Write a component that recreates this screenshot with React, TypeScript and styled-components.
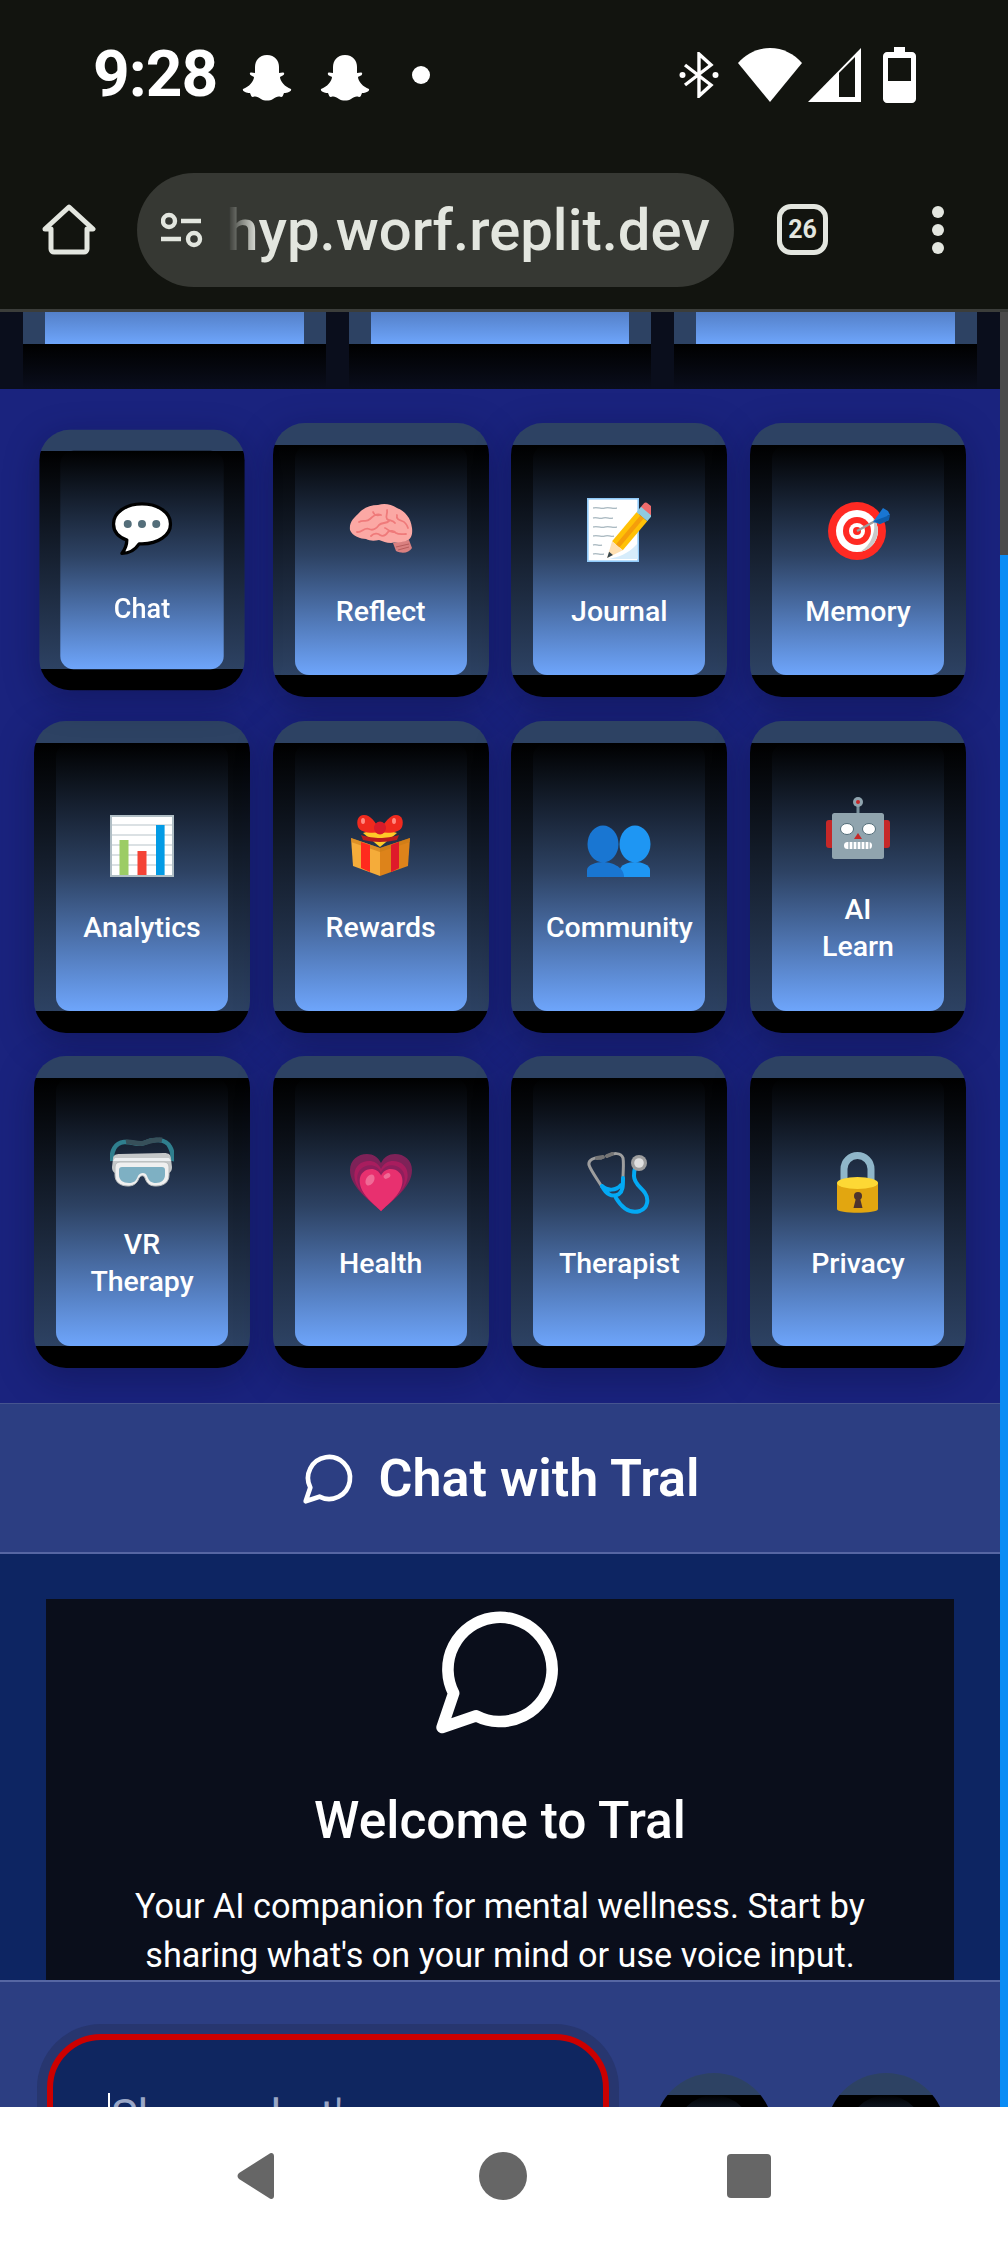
import React from 'react';
import styled, { createGlobalStyle } from 'styled-components';

const GlobalStyle = createGlobalStyle`
  html, body {
    margin: 0;
    padding: 0;
    background: #fff;
    font-family: Roboto, "Liberation Sans", sans-serif;
  }
  * { box-sizing: border-box; }
`;

const Phone = styled.div`
  width: 1008px;
  height: 2244px;
  display: flex;
  flex-direction: column;
  overflow: hidden;
`;

const StatusBar = styled.div`
  height: 150px;
  flex-shrink: 0;
  background: #12140f;
  display: flex;
  align-items: center;
  justify-content: space-between;
  padding: 0 92px 0 93px;
  color: #fff;
`;

const StatusGroup = styled.div`
  display: flex;
  align-items: center;
`;

const Clock = styled.span`
  font-size: 64px;
  font-weight: 700;
  line-height: 1;
  margin-right: 25px;
  letter-spacing: -1px;
`;

const Ghost = styled.svg`
  width: 50px;
  height: 46px;
  margin-right: 28px;
  margin-top: 5px;
`;

const NoticeDot = styled.span`
  width: 18px;
  height: 18px;
  border-radius: 50%;
  background: #fff;
  margin-left: 14px;
`;

const StatusIcon = styled.svg<{ $gap?: number }>`
  display: block;
  margin-left: ${p => p.$gap ?? 0}px;
`;

const Toolbar = styled.div`
  height: 162px;
  flex-shrink: 0;
  background: #12140f;
  border-bottom: 3px solid #3b3d3a;
  display: flex;
  align-items: center;
  padding: 0 64px 0 42px;
  color: #e3e6df;
`;

const UrlPill = styled.div`
  width: 597px;
  height: 114px;
  margin-left: 41px;
  border-radius: 57px;
  background: #363833;
  display: flex;
  align-items: center;
  padding: 0 24px;
`;

const UrlClip = styled.div`
  width: 482px;
  margin-left: 23px;
  overflow: hidden;
  display: flex;
  justify-content: flex-end;
  font-size: 58px;
  font-weight: 500;
  white-space: nowrap;
  color: #e3e6df;
  line-height: 70px;
  -webkit-mask-image: linear-gradient(to right, transparent 0, #000 30px);
  mask-image: linear-gradient(to right, transparent 0, #000 30px);
`;

const TabCount = styled.div`
  width: 51px;
  height: 51px;
  margin-left: 43px;
  border: 5px solid #e3e6df;
  border-radius: 14px;
  display: flex;
  align-items: center;
  justify-content: center;
  font-size: 25px;
  font-weight: 700;
`;

const MenuDots = styled.div`
  display: flex;
  flex-direction: column;
  gap: 6px;
  margin-left: 104px;
`;

const MenuDot = styled.span`
  width: 12px;
  height: 12px;
  border-radius: 50%;
  background: #e3e6df;
`;

const Viewport = styled.div`
  flex: 1;
  min-height: 0;
  display: flex;
`;

const Main = styled.main`
  flex: 1;
  min-width: 0;
  display: flex;
  flex-direction: column;
  overflow: hidden;
`;

const ScrollBar = styled.div`
  width: 8px;
  flex-shrink: 0;
  background: linear-gradient(to bottom, #4a4a4a 0 243px, #0a8cf5 243px);
`;

const TopStrip = styled.div`
  height: 77px;
  flex-shrink: 0;
  background: #0a0e1c;
  display: grid;
  grid-template-columns: repeat(3, 1fr);
  gap: 23px;
  padding: 0 23px;
`;

const StripCard = styled.div`
  padding: 0 22px;
  background: linear-gradient(to bottom, #2d4263 0 32px, #000 32px, #0a0e1c 100%);
`;

const StripInner = styled.div`
  height: 32px;
  background: linear-gradient(to bottom, #5480c8, #6ea5fb);
`;

const FeatureSection = styled.section`
  flex-shrink: 0;
  background: #1a237e;
  padding: 34px 34px 35px;
  display: grid;
  grid-template-columns: repeat(4, 216px);
  grid-template-rows: 274px 312px 312px;
  justify-content: space-between;
  row-gap: 23.5px;
`;

const Tile = styled.div<{ $pressed?: boolean }>`
  border-radius: 32px;
  padding: 22px;
  display: flex;
  background: linear-gradient(
    to bottom,
    #2d4263 22px,
    #000 22px,
    #2d4263 calc(100% - 22px),
    #000 calc(100% - 22px)
  );
  box-shadow: 0 10px 36px rgba(10, 12, 60, 0.4);
  transform: ${p => (p.$pressed ? 'scale(0.95)' : 'none')};
`;

const TileFace = styled.div`
  flex: 1;
  border-radius: 14px;
  background: linear-gradient(to bottom, #000 0%, #2d4263 48%, #6ea5fb 100%);
  display: flex;
  flex-direction: column;
  align-items: center;
  justify-content: center;
`;

const TileIcon = styled.svg`
  width: 64px;
  height: 64px;
  margin: 7px 0 31px;
  display: block;
`;

const TileLabel = styled.span`
  font-size: 28.5px;
  line-height: 37px;
  font-weight: 500;
  color: #fff;
  text-align: center;
  white-space: pre-line;
`;

const ChatHeader = styled.header`
  height: 151px;
  flex-shrink: 0;
  background: #2c3e82;
  border-top: 1px solid #46548f;
  border-bottom: 2px solid #5666a3;
  display: flex;
  align-items: center;
  justify-content: center;
  gap: 22px;
  color: #fff;
  font-size: 52px;
  font-weight: 600;
`;

const Messages = styled.div`
  height: 426px;
  flex-shrink: 0;
  background: #0d2562;
  padding: 45px 46px 0;
`;

const WelcomeCard = styled.div`
  height: 100%;
  background: #0a0e1b;
  color: #fff;
  display: flex;
  flex-direction: column;
  align-items: center;
  text-align: center;
  overflow: hidden;
  padding-top: 1px;
`;

const WelcomeTitle = styled.h2`
  margin: 52px 0 0;
  font-size: 51.5px;
  line-height: 60px;
  font-weight: 500;
`;

const WelcomeText = styled.p`
  margin: 31px 0 0;
  font-size: 34.2px;
  line-height: 49px;
  font-weight: 400;
`;

const InputBar = styled.div`
  height: 127px;
  flex-shrink: 0;
  background: #2c3e82;
  border-top: 2px solid #5666a3;
  overflow: hidden;
`;

const InputRow = styled.div`
  height: 302px;
  padding-left: 47px;
  display: flex;
  align-items: center;
`;

const InputBox = styled.div`
  width: 562px;
  height: 198px;
  border: 6px solid #cc0000;
  border-radius: 54px;
  background: #0f2660;
  box-shadow: 0 0 0 10px #27366f;
  padding: 53px 0 0 55px;
`;

const Placeholder = styled.span`
  display: block;
  width: 450px;
  height: 60px;
  border-left: 2px solid #fff;
  padding-left: 1px;
  font-size: 45px;
  line-height: 45px;
  color: #9aa6c6;
`;

const RoundButton = styled.div<{ $gap: number }>`
  width: 120px;
  height: 120px;
  flex-shrink: 0;
  margin-left: ${p => p.$gap}px;
  border-radius: 50%;
  background: linear-gradient(to bottom, #2d4263 22px, #000 22px);
  display: flex;
  align-items: center;
  justify-content: center;
`;

const RoundFace = styled.div`
  width: 76px;
  height: 76px;
  border-radius: 50%;
  background: linear-gradient(to bottom, #000 0%, #2d4263 50%, #6ea5fb 100%);
`;

const NavBar = styled.nav`
  height: 137px;
  flex-shrink: 0;
  background: #fff;
  display: flex;
  align-items: center;
  justify-content: center;
  gap: 198px;
  padding-right: 2px;
`;

const NavIcon = styled.svg`
  width: 48px;
  height: 48px;
  fill: #666;
  display: block;
`;

const GhostShape = () => (
  <Ghost viewBox="0 0 50 46" fill="#fff">
    <path d="M25 0c8 0 12 6 12 12v6c2 0 4-1 5 0 1 2-2 3-4 4 0 4 5 10 11 12 1 2-3 4-7 4-1 2-1 4-3 4-3-1-5 0-8 2-3 2-9 2-12 0-3-2-5-3-8-2-2 0-2-2-3-4-4 0-8-2-7-4 6-2 11-8 11-12-2-1-5-2-4-4 1-1 3 0 5 0v-6C13 6 17 0 25 0z" />
  </Ghost>
);

const ChatOutline = ({ size, width }: { size: number; width: number }) => (
  <svg width={size} height={size} viewBox="0 0 24 24" fill="none" stroke="#fff" strokeWidth={width} strokeLinecap="round" strokeLinejoin="round">
    <path d="M7.9 20A9 9 0 1 0 4 16.1L2 22Z" />
  </svg>
);

const SpeechIcon = () => (
  <TileIcon viewBox="0 0 64 64">
    <path d="M32 3C15 3 2 12 2 24c0 8 6 14 14 17 0 5-2 10-5 14 7 0 14-4 18-10 1 0 2 0 3 0 17 0 30-9 30-21S49 3 32 3z" fill="#fff" stroke="#000" strokeWidth="3.5" strokeLinejoin="round" />
    <circle cx="17" cy="24" r="4.2" fill="#546e7a" />
    <circle cx="32" cy="24" r="4.2" fill="#546e7a" />
    <circle cx="47" cy="24" r="4.2" fill="#546e7a" />
  </TileIcon>
);

const BrainIcon = () => (
  <TileIcon viewBox="0 0 64 64">
    <path d="M44 45l16-3 3 8c-3 5-10 6-16 3z" fill="#d98080" />
    <path d="M47 49l13-3M49 52l11-3" stroke="#b85c5c" strokeWidth="1" />
    <path d="M1 32C0 24 5 20 9 16c5-6 12-9 20-9 6-2 13-1 19 3 8 3 14 10 15 20 1 8-2 12-6 13-6 2-11 1-15 2-5 0-8-2-12-3-5 1-9 1-13-1-5 0-14-3-16-9z" fill="#fba8a4" />
    <path d="M10 24c5-3 7 1 11-3 3-3 7-6 11-4M8 34c5 1 7-5 12-3 4 2 7 0 10-4 3-3 7-1 10-4M24 14c1 3 4 4 7 3M38 12c1 4-2 6 0 9 2 2 6 1 8 4M48 17c-1 4 2 5 5 6 3 1 5 4 6 7M22 38c3-3 7-3 9-1 3 2 6 0 8-3 2-2 6-1 8 1 3 2 7 1 10 1M36 30c3 1 5 5 9 4" fill="none" stroke="#ef7a7a" strokeWidth="1.8" strokeLinecap="round" />
  </TileIcon>
);

const MemoIcon = () => (
  <TileIcon viewBox="0 0 64 64">
    <rect x="0.8" y="0.8" width="50.4" height="62.4" fill="#fff" stroke="#90caf9" strokeWidth="1.6" />
    <path d="M6 10c5-1 8 1 12 0s8 1 12 0M6 20c4-1 6 1 10 0s6 1 10 0M6 29c5-1 8 1 12 0s8 1 12 0M6 38c5-1 8 1 12 0s6 1 9 0M6 47c3-1 6 1 9 0M6 56c4-1 7 1 11 0" fill="none" stroke="#90a4ae" strokeWidth="1.1" />
    <path d="M20 60c8 1 20-3 30-14l1 15H26z" fill="#d6ecfb" />
    <g transform="rotate(40 42 34)">
      <rect x="35" y="0" width="14" height="9" rx="3" fill="#ef6c6c" />
      <rect x="35" y="7" width="14" height="7" fill="#8fcbe0" />
      <rect x="35" y="14" width="14" height="38" fill="#ffc107" />
      <rect x="40" y="14" width="4.5" height="38" fill="#f59e0b" />
      <path d="M35 52h14l-7 16z" fill="#ffe0b2" />
      <path d="M39.5 62h5L42 68z" fill="#37474f" />
    </g>
  </TileIcon>
);

const DartIcon = () => (
  <TileIcon viewBox="0 0 64 64">
    <circle cx="31" cy="33" r="29" fill="#ff2a23" />
    <path d="M51 12A29 29 0 0 1 20 60 29 29 0 0 0 51 12z" fill="#c2203a" />
    <circle cx="31" cy="33" r="21" fill="#fff" />
    <path d="M47 20A21 21 0 0 1 34 54 30 30 0 0 0 47 20z" fill="#c9c9c9" />
    <circle cx="31" cy="33" r="14" fill="#ff2a23" />
    <circle cx="31" cy="33" r="8" fill="#fff" />
    <circle cx="31" cy="33" r="4" fill="#ff2a23" />
    <path d="M31 33l20-11" stroke="#9e9e9e" strokeWidth="2.4" />
    <path d="M47 24l10-14 5 3 2 4-3 1 2 4-9 4z" fill="#1976d2" />
    <path d="M48 23l16-6-1 5-9 4z" fill="#0d5cab" />
  </TileIcon>
);

const ChartIcon = () => (
  <TileIcon viewBox="0 0 64 64">
    <rect x="0" y="1" width="64" height="62" fill="#b0bec5" />
    <rect x="2" y="3" width="60" height="58" fill="#fff" />
    <path d="M2 11h60M2 21h60M2 31h60M2 41h60M2 51h60" stroke="#cfd8dc" strokeWidth="1.6" />
    <rect x="9.5" y="26" width="9" height="35" fill="#9ccc65" />
    <rect x="27.5" y="37" width="9" height="24" fill="#f44336" />
    <rect x="46" y="11" width="8.6" height="50" fill="#039be5" />
  </TileIcon>
);

const GiftIcon = () => (
  <TileIcon viewBox="0 0 64 64">
    <path d="M2 24l29 10v28L4 52z" fill="#f5ac3a" />
    <path d="M31 34l30-10-2 28-28 10z" fill="#dd831a" />
    <path d="M2 24l29 10 30-10v4L31 38 2 28z" fill="#c97a16" opacity="0.55" />
    <path d="M14 19L31 14l17 5-17 14z" fill="#ffca28" />
    <path d="M12 28l9 3v27l-9-4zM42 31l8-3v26l-8 4z" fill="#ff2a1e" />
    <path d="M42 31l8-3v26l-8 4z" fill="#df1a2a" />
    <path d="M12 21c6 2 14 3 19 3s13-1 19-3l-2 5c-6 1-11 2-17 2s-11-1-17-2z" fill="#b71c1c" />
    <path d="M31 16C26 8 22 1 15 1 9 1 7 7 9 13c2 5 12 7 22 5z" fill="#f02a1e" />
    <path d="M31 16C36 8 41 1 47 1c6 0 8 6 6 12-2 5-12 7-22 5z" fill="#f02a1e" />
    <ellipse cx="31" cy="14" rx="6" ry="6.5" fill="#d81b2a" />
    <ellipse cx="14" cy="7" rx="2" ry="3" fill="#ff8a80" />
    <ellipse cx="45" cy="7" rx="2" ry="3" fill="#ff8a80" />
  </TileIcon>
);

const PeopleIcon = () => (
  <TileIcon viewBox="0 0 64 64">
    <ellipse cx="48" cy="30" rx="15.5" ry="18.5" fill="#1e96f3" />
    <path d="M33 63v-7c0-5 8-8 15-8s15 3 15 8v7z" fill="#1e96f3" />
    <ellipse cx="16" cy="30" rx="15.5" ry="18.5" fill="#1976d2" />
    <path d="M0 63v-7c0-5 9-8 16-8s21 4 21 15z" fill="#1976d2" />
  </TileIcon>
);

const RobotIcon = () => (
  <TileIcon viewBox="0 0 64 64">
    <rect x="30.5" y="8" width="3" height="10" fill="#78909c" />
    <circle cx="32" cy="6" r="5" fill="#90a4ae" />
    <circle cx="32" cy="6" r="2" fill="#c62828" />
    <rect x="0" y="24" width="8" height="28" rx="3" fill="#c62828" />
    <rect x="56" y="24" width="8" height="28" rx="3" fill="#c62828" />
    <rect x="6" y="17" width="52" height="46" rx="2.5" fill="#90a4ae" />
    <ellipse cx="21" cy="33" rx="6.5" ry="5.5" fill="#fff" stroke="#546e7a" />
    <ellipse cx="43" cy="33" rx="6.5" ry="5.5" fill="#fff" stroke="#546e7a" />
    <path d="M32 37l4 6h-8z" fill="#c62828" />
    <rect x="18" y="46" width="28" height="7" rx="3.5" fill="#fff" />
    <path d="M23 46v7M27 46v7M31 46v7M35 46v7M39 46v7M43 46v7" stroke="#78909c" />
  </TileIcon>
);

const GogglesIcon = () => (
  <TileIcon viewBox="0 0 64 64">
    <path d="M2 30c-1-10 3-18 12-19 8-1 14 4 20 1 8-4 22-5 26 4 3 5 3 10 2 14" fill="none" stroke="#2f7f8e" strokeWidth="4.5" />
    <path d="M16 11c6-1 12 3 18 1 6-2 12-4 18-3" fill="none" stroke="#37505a" strokeWidth="5" />
    <path d="M3 28c0-4 3-5 7-5l44-1c5 0 7 2 7 6l1 8c0 4-2 6-4 6H6c-2 0-4-2-4-6z" fill="#c4c7c8" />
    <path d="M5 27h54l2 3H3z" fill="#eceff1" />
    <path d="M5 36c0-3 2-5 5-5h44c3 0 5 2 5 5v8c0 7-5 11-13 11-6 0-9-2-11-8-1-3-4-3-6 0-2 6-6 8-11 8C10 55 5 51 5 44z" fill="#f0f0f0" stroke="#b8bcbd" />
    <path d="M9 39c0-2 1-3 3-3h40c2 0 3 1 3 3v5c0 5-4 8-9 8-5 0-7-2-9-7-1-4-7-4-9 0-2 5-4 7-9 7-6 0-10-3-10-8z" fill="#7eb0c3" />
  </TileIcon>
);

const heartPath = 'M32 61C20 50 1 37 1 20 1 10 9 4 18 4c6 0 11 3 14 9 3-6 8-9 14-9 9 0 17 6 17 16 0 17-19 30-31 41z';

const HeartIcon = () => (
  <TileIcon viewBox="0 0 64 64">
    <path d={heartPath} fill="#7e2258" />
    <path d={heartPath} fill="#a81d5e" transform="translate(4.5 7.5) scale(.86 .875)" />
    <path d={heartPath} fill="#8e1f5c" transform="translate(7.5 12) scale(.765 .8)" />
    <path d={heartPath} fill="#e8306f" transform="translate(10 16) scale(.69 .74)" />
    <ellipse cx="21" cy="30" rx="4" ry="6" fill="#f06a96" transform="rotate(30 21 30)" />
    <ellipse cx="38" cy="26" rx="3.6" ry="2.4" fill="#f06a96" transform="rotate(-30 38 26)" />
  </TileIcon>
);

const StethoscopeIcon = () => (
  <TileIcon viewBox="0 0 64 64">
    <path d="M14 8C7 7 1 10 2 15c2 6 9 15 13 22M20 6c6-3 14-4 16 2 1 6 0 14 0 20" fill="none" stroke="#9e9e9e" strokeWidth="3" strokeLinecap="round" />
    <path d="M10 8l6-1M20 6l5-2" stroke="#757575" strokeWidth="4" strokeLinecap="round" />
    <path d="M15 36c4 8 10 12 17 8 4-3 4-8 4-16M15 36c5 5 14 5 19-1M29 48c6 10 14 16 24 13 8-3 9-12 5-18-3-5-11-9-11-17 0-3 0-5 1-8" fill="none" stroke="#03a9f4" strokeWidth="4" strokeLinecap="round" />
    <circle cx="52" cy="13" r="8" fill="#9e9e9e" />
    <circle cx="52" cy="13" r="4.8" fill="#e0e0e0" />
  </TileIcon>
);

const LockIcon = () => (
  <TileIcon viewBox="0 0 64 64">
    <path d="M18 30V19a13.5 13.5 0 0 1 27 0v11" fill="none" stroke="#8fb6c9" strokeWidth="7" />
    <path d="M11 33c0-3 41-3 41 0v26c0 5-41 5-41 0z" fill="#e2a610" />
    <ellipse cx="31.5" cy="33" rx="20.5" ry="6" fill="#fdd835" />
    <circle cx="32" cy="46" r="4" fill="#4e342e" />
    <path d="M30.5 46l-3 12h9l-3-12z" fill="#4e342e" />
  </TileIcon>
);

const tiles: { label: string; Icon: React.FC; pressed?: boolean }[] = [
  { label: 'Chat', Icon: SpeechIcon, pressed: true },
  { label: 'Reflect', Icon: BrainIcon },
  { label: 'Journal', Icon: MemoIcon },
  { label: 'Memory', Icon: DartIcon },
  { label: 'Analytics', Icon: ChartIcon },
  { label: 'Rewards', Icon: GiftIcon },
  { label: 'Community', Icon: PeopleIcon },
  { label: 'AI\nLearn', Icon: RobotIcon },
  { label: 'VR\nTherapy', Icon: GogglesIcon },
  { label: 'Health', Icon: HeartIcon },
  { label: 'Therapist', Icon: StethoscopeIcon },
  { label: 'Privacy', Icon: LockIcon },
];

export default function App() {
  return (
    <Phone>
      <GlobalStyle />
      <StatusBar>
        <StatusGroup>
          <Clock>9:28</Clock>
          <GhostShape />
          <GhostShape />
          <NoticeDot />
        </StatusGroup>
        <StatusGroup>
          <StatusIcon width="40" height="46" viewBox="0 0 40 46" fill="none" stroke="#fff" strokeWidth="3.4">
            <path d="M6 13l26 20-12 11V2l12 11L6 33" />
            <circle cx="3.5" cy="23" r="3" fill="#fff" stroke="none" />
            <circle cx="36.5" cy="23" r="3" fill="#fff" stroke="none" />
          </StatusIcon>
          <StatusIcon $gap={19} width="64" height="54" viewBox="0 0 64 54" fill="#fff">
            <path d="M32 54L0 15C8 6 19 0 32 0s24 6 32 15z" />
          </StatusIcon>
          <StatusIcon $gap={6} width="53" height="54" viewBox="0 0 53 54">
            <path d="M0 54L53 0v54z" fill="#fff" />
            <path d="M31 25L47 9v40H31z" fill="#12140f" />
          </StatusIcon>
          <StatusIcon $gap={22} width="33" height="56" viewBox="0 0 33 56">
            <path d="M11 0h11v5h7c2 0 4 2 4 4v43c0 2-2 4-4 4H4c-2 0-4-2-4-4V9c0-2 2-4 4-4h7z" fill="#fff" />
            <rect x="5" y="11" width="23" height="23" fill="#12140f" />
          </StatusIcon>
        </StatusGroup>
      </StatusBar>

      <Toolbar>
        <svg width="54" height="52" viewBox="0 0 54 52" fill="none" stroke="#e3e6df" strokeWidth="5" strokeLinejoin="round" strokeLinecap="round">
          <path d="M3 25L27 3l24 22h-6v20a3 3 0 0 1-3 3H12a3 3 0 0 1-3-3V25z" />
        </svg>
        <UrlPill>
          <svg width="44" height="36" viewBox="0 0 44 36" fill="none" stroke="#e3e6df" strokeWidth="4.4" style={{ flexShrink: 0 }}>
            <circle cx="8" cy="9" r="6" />
            <circle cx="33" cy="27" r="6" />
            <path d="M20 9h20M0 27h20" />
          </svg>
          <UrlClip>hyp.worf.replit.dev</UrlClip>
        </UrlPill>
        <TabCount>26</TabCount>
        <MenuDots>
          <MenuDot />
          <MenuDot />
          <MenuDot />
        </MenuDots>
      </Toolbar>

      <Viewport>
        <Main>
          <TopStrip>
            <StripCard><StripInner /></StripCard>
            <StripCard><StripInner /></StripCard>
            <StripCard><StripInner /></StripCard>
          </TopStrip>

          <FeatureSection>
            {tiles.map(({ label, Icon, pressed }) => (
              <Tile key={label} $pressed={pressed}>
                <TileFace>
                  <Icon />
                  <TileLabel>{label}</TileLabel>
                </TileFace>
              </Tile>
            ))}
          </FeatureSection>

          <ChatHeader>
            <ChatOutline size={56} width={2} />
            Chat with Tral
          </ChatHeader>

          <Messages>
            <WelcomeCard>
              <ChatOutline size={140} width={2} />
              <WelcomeTitle>Welcome to Tral</WelcomeTitle>
              <WelcomeText>
                Your AI companion for mental wellness. Start by
                <br />
                sharing what's on your mind or use voice input.
              </WelcomeText>
            </WelcomeCard>
          </Messages>

          <InputBar>
            <InputRow>
              <InputBox>
                <Placeholder>Share what's on your mind...</Placeholder>
              </InputBox>
              <RoundButton $gap={45}><RoundFace /></RoundButton>
              <RoundButton $gap={52}><RoundFace /></RoundButton>
            </InputRow>
          </InputBar>
        </Main>
        <ScrollBar />
      </Viewport>

      <NavBar>
        <NavIcon viewBox="0 0 48 48">
          <path d="M41 4v40c0 3-3 4-5 2L6 27c-2-2-2-4 0-6L36 2c2-2 5-1 5 2z" />
        </NavIcon>
        <NavIcon viewBox="0 0 48 48">
          <circle cx="24" cy="24" r="24" />
        </NavIcon>
        <NavIcon viewBox="0 0 48 48">
          <rect x="2" y="2" width="44" height="44" rx="4" />
        </NavIcon>
      </NavBar>
    </Phone>
  );
}
